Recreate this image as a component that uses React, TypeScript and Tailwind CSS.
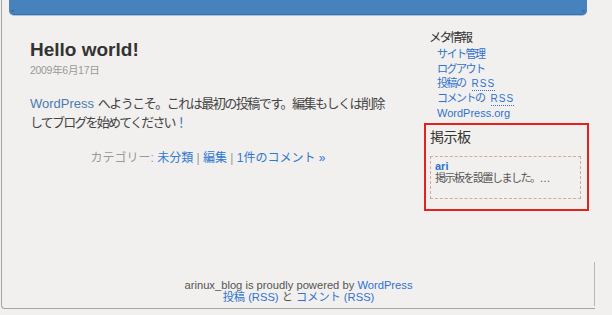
import React from "react";

const FONT = { fontFamily: '"Liberation Sans", "Noto Sans CJK JP", sans-serif' };

export default function App() {
  return (
    <div className="w-[612px] h-[315px] bg-[#f1f0ee] overflow-hidden text-[#333]" style={FONT}>
      <div className="relative ml-[1px] w-[594px] h-[309px] border-l border-b border-[#a5a5a5] rounded-bl-[4px] flex flex-col">
        <header className="ml-[7px] mr-[8px] h-[15px] bg-[#4682bb] rounded-b-[5px] border-b border-[#3b6da6] shadow-[0_1px_0_#a9c2de] flex items-end justify-between px-[2px] pb-[1px] text-[6px] leading-[6px] text-[#2a5a94]">
          <span>«</span>
          <span>»</span>
        </header>

        <div className="flex">
          <main className="w-[422px] pl-[28px] pt-[23px]">
            <div className="w-[356px]">
              <h2 className="text-[19px] leading-[24px] font-bold text-[#333]">Hello world!</h2>
              <div className="text-[10.5px] leading-[14px] text-[#999] mt-[1px] tracking-[-0.3px]">2009年6月17日</div>
              <p className="mt-[17px] text-[13px] leading-[19px] text-[#444]">
                <span className="text-[#4a7bb0]">WordPress</span>{" "}
                <span className="tracking-[-1.5px]">へようこそ。これは最初の投稿です。編集もしくは削除</span>
                <br />
                <span className="tracking-[-1.8px]">してブログを始めてください</span>
                <span className="text-[#4a7bb0]">！</span>
              </p>
              <div className="mt-[18px] text-center text-[12px] leading-[16px] text-[#999]">
                カテゴリー: <span className="text-[#2f78d2]">未分類</span> | <span className="text-[#2f78d2]">編集</span> |{" "}
                <span className="text-[#2f78d2]">1件のコメント »</span>
              </div>
            </div>
          </main>

          <aside className="w-[165px] pt-[15px]">
            <h3 className="pl-[5px] text-[12.5px] leading-[16px] tracking-[-2px] text-[#333]">メタ情報</h3>
            <ul className="mt-[1px] pl-[13px] text-[11px] leading-[14.5px] text-[#2f72d0]">
              <li className="tracking-[-1.5px]">サイト管理</li>
              <li className="tracking-[-1.5px]">ログアウト</li>
              <li className="flex items-baseline gap-[6px]">
                <span className="tracking-[-1.5px]">投稿の</span>
                <span className="border-b border-dotted border-[#2f72d0] tracking-[1px] text-[10px] leading-[12px]">RSS</span>
              </li>
              <li className="flex items-baseline gap-[6px]">
                <span className="tracking-[-1.5px]">コメントの</span>
                <span className="border-b border-dotted border-[#2f72d0] tracking-[1px] text-[10px] leading-[12px]">RSS</span>
              </li>
              <li>WordPress.org</li>
            </ul>

            <div className="mt-[2px] h-[88px] border-2 border-[#e1221d] pt-[3px] pl-[4px]">
              <h3 className="text-[14px] leading-[18px] tracking-[-0.5px] text-[#333]">掲示板</h3>
              <div className="mt-[10px] w-[151px] h-[43px] border border-dashed border-[#d9a795] pt-[3px] pl-[4px]">
                <div className="text-[11px] leading-[12px] font-bold text-[#2f72d0]">ari</div>
                <div className="text-[11px] leading-[12px] text-[#555] tracking-[-1.5px]">掲示板を設置しました。…</div>
              </div>
            </div>
          </aside>
        </div>

        <footer className="mt-auto pb-[5px] text-center text-[11.2px] leading-[12px] text-[#555]">
          <div>
            arinux_blog is proudly powered by <span className="text-[#2f72d0]">WordPress</span>
          </div>
          <div className="mt-[0.5px]">
            <span className="text-[#2f72d0]">投稿 (RSS)</span> と <span className="text-[#2f72d0]">コメント (RSS)</span>
          </div>
        </footer>

        <div className="absolute right-0 top-[262px] h-[44px] w-[1px] bg-[#b5b5b5]" />
      </div>
    </div>
  );
}
